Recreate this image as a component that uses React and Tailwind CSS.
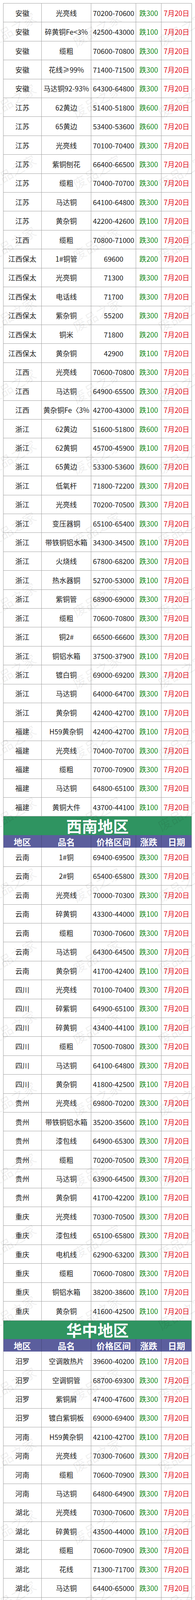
const east = [
  ["安徽", "光亮线", "70200-70600", "跌300"],
  ["安徽", "碎黄铜Fe<3%", "42500-43000", "跌100"],
  ["安徽", "缆粗", "70600-70800", "跌300"],
  ["安徽", "花线≥99%", "71400-71500", "跌300"],
  ["安徽", "马达铜92-93%", "64300-64800", "跌300"],
  ["江苏", "62黄边", "51400-51800", "跌600"],
  ["江苏", "65黄边", "53400-53600", "跌600"],
  ["江苏", "光亮线", "70100-70400", "跌300"],
  ["江苏", "紫铜刨花", "66400-66500", "跌300"],
  ["江苏", "缆粗", "70400-70700", "跌300"],
  ["江苏", "马达铜", "64100-64800", "跌300"],
  ["江苏", "黄杂铜", "42200-42600", "跌100"],
  ["江西", "缆粗", "70800-71000", "跌300"],
  ["江西保太", "1#铜管", "69600", "跌200"],
  ["江西保太", "光亮铜", "71300", "跌300"],
  ["江西保太", "电话线", "71700", "跌300"],
  ["江西保太", "紫杂铜", "55200", "跌300"],
  ["江西保太", "铜米", "71800", "跌200"],
  ["江西保太", "黄杂铜", "42900", "跌100"],
  ["江西", "光亮线", "70600-70800", "跌300"],
  ["江西", "马达铜", "64900-65500", "跌300"],
  ["江西", "黄杂铜Fe〈3%", "42700-43000", "跌100"],
  ["浙江", "62黄边", "51600-51800", "跌600"],
  ["浙江", "62黄铜", "45700-45900", "跌100"],
  ["浙江", "65黄边", "53300-53600", "跌600"],
  ["浙江", "低氧杆", "71800-72200", "跌300"],
  ["浙江", "光亮线", "70200-70500", "跌300"],
  ["浙江", "变压器铜", "65100-65400", "跌300"],
  ["浙江", "带铁铜铝水箱", "34300-34500", "跌100"],
  ["浙江", "火烧线", "67800-68200", "跌300"],
  ["浙江", "热水器铜", "52700-53000", "跌100"],
  ["浙江", "紫铜管", "68900-69000", "跌300"],
  ["浙江", "缆粗", "70600-70800", "跌300"],
  ["浙江", "铜2#", "66500-66600", "跌300"],
  ["浙江", "铜铝水箱", "37500-37900", "跌100"],
  ["浙江", "镀白铜", "69000-69200", "跌300"],
  ["浙江", "马达铜", "64000-64700", "跌300"],
  ["浙江", "黄杂铜", "42400-42700", "跌100"],
  ["福建", "H59黄杂铜", "42400-42700", "跌100"],
  ["福建", "光亮线", "70400-70700", "跌300"],
  ["福建", "缆粗", "70700-70900", "跌300"],
  ["福建", "马达铜", "64800-65100", "跌300"],
  ["福建", "黄铜大件", "43700-44100", "跌100"],
];

const southwest = [
  ["云南", "1#铜", "69400-69500", "跌300"],
  ["云南", "2#铜", "65400-65800", "跌300"],
  ["云南", "光亮线", "70000-70300", "跌300"],
  ["云南", "碎黄铜", "43300-44000", "跌100"],
  ["云南", "缆粗", "70300-70600", "跌300"],
  ["云南", "马达铜", "64300-64500", "跌300"],
  ["云南", "黄杂铜", "41700-42400", "跌100"],
  ["四川", "光亮线", "70100-70400", "跌300"],
  ["四川", "碎紫铜", "64900-65100", "跌300"],
  ["四川", "碎黄铜", "43400-44100", "跌100"],
  ["四川", "缆粗", "70500-70800", "跌300"],
  ["四川", "马达铜", "64100-64800", "跌300"],
  ["四川", "黄杂铜", "41800-42500", "跌100"],
  ["贵州", "光亮线", "69800-70200", "跌300"],
  ["贵州", "带铁铜铝水箱", "35200-35600", "跌100"],
  ["贵州", "漆包线", "64900-65300", "跌300"],
  ["贵州", "缆粗", "70200-70500", "跌300"],
  ["贵州", "马达铜", "63900-64500", "跌300"],
  ["贵州", "黄杂铜", "41700-42200", "跌100"],
  ["重庆", "光亮线", "70300-70500", "跌300"],
  ["重庆", "漆包线", "65100-65800", "跌300"],
  ["重庆", "电机线", "62900-63200", "跌300"],
  ["重庆", "缆粗", "70600-70800", "跌300"],
  ["重庆", "铜铝水箱", "38200-38600", "跌100"],
  ["重庆", "黄杂铜", "41600-42500", "跌100"],
];

const central = [
  ["汨罗", "空调散热片", "39600-40200", "跌100"],
  ["汨罗", "空调铜管", "68700-69300", "跌300"],
  ["汨罗", "紫铜屑", "47400-47600", "跌300"],
  ["汨罗", "镀白紫铜板", "69000-69400", "跌300"],
  ["河南", "H59黄杂铜", "42100-42700", "跌100"],
  ["河南", "光亮线", "70300-70600", "跌300"],
  ["河南", "缆粗", "70600-70900", "跌300"],
  ["河南", "马达铜", "64800-64900", "跌300"],
  ["湖北", "光亮线", "70300-70600", "跌300"],
  ["湖北", "碎黄铜", "43500-44000", "跌100"],
  ["湖北", "缆粗", "70600-70900", "跌300"],
  ["湖北", "花线", "71300-71700", "跌300"],
  ["湖北", "马达铜", "64400-65000", "跌300"],
  ["湖北", "黄铜大件", "43600-44200", "跌100"],
  ["湖北", "黄铜水箱", "42100-42700", "跌100"],
  ["湖南", "光亮线", "70200-70500", "跌300"],
  ["湖南", "碎黄铜", "43100-43900", "跌100"],
  ["湖南", "缆粗", "70600-70800", "跌300"],
  ["湖南", "马达铜", "64300-64900", "跌300"],
  ["湖南", "黄杂铜", "42000-42700", "跌100"],
  ["河南", "火烧线95-96%", "66800-67100", "跌300"],
  ["河南", "碎紫铜90%左右", "64900-65300", "跌300"],
];

// shared column template: 地区 / 品名 / 价格区间 / 涨跌 / 日期
const cols = "grid grid-cols-[97.7px_127.6px_115px_65px_1fr]";

function Row({ row }) {
  const [area, name, price, change] = row;
  return (
    <div className={`${cols} h-[48.42px] overflow-hidden border-b border-[#a3a3a3] text-[18px] leading-none`}>
      <div className="flex items-center justify-center border-r border-[#a3a3a3] text-[#1c1c1c]">{area}</div>
      <div className="flex items-center justify-center whitespace-nowrap border-r border-[#a3a3a3] text-[#1c1c1c]">{name}</div>
      <div className="flex items-center justify-center border-r border-[#a3a3a3] text-[#1c1c1c]">{price}</div>
      <div className="flex items-center justify-center border-r border-[#a3a3a3] text-[#15891a]">{change}</div>
      <div className="flex items-center justify-center text-[#e3101c]">7月20日</div>
    </div>
  );
}

function SectionHead({ title }) {
  return (
    <>
      <div className="flex h-[47.5px] items-center justify-center bg-[#2f9461] text-[40px] font-bold leading-none text-white">
        {title}
      </div>
      <div className={`${cols} h-[32.4px] bg-[#5b5e9d] text-[22px] font-bold leading-none text-white`}>
        <div className="flex items-center justify-center border-r border-[#44467a]">地区</div>
        <div className="flex items-center justify-center border-r border-[#44467a]">品名</div>
        <div className="flex items-center justify-center border-r border-[#44467a]">价格区间</div>
        <div className="flex items-center justify-center border-r border-[#44467a]">涨跌</div>
        <div className="flex items-center justify-center">日期</div>
      </div>
    </>
  );
}

// faint diagonal "废品之家" watermark tiled over the table
function Watermarks() {
  const marks = [];
  for (let k = 0; k < 25; k++) {
    [30, 248, 466].forEach((x) => {
      marks.push({ x, y: 75 + k * 182.5 });
    });
  }
  return (
    <div className="pointer-events-none absolute inset-0 overflow-hidden">
      {marks.map((m, i) => (
        <div
          key={i}
          className="absolute -translate-x-1/2 -translate-y-1/2 -rotate-30 whitespace-nowrap text-[34px] leading-none text-black/[0.07]"
          style={{ left: m.x, top: m.y }}
        >
          废品之家
        </div>
      ))}
    </div>
  );
}

export default function App() {
  return (
    <div
      className="relative h-[4535px] w-[500px] overflow-hidden bg-white pt-2"
      style={{ fontFamily: '"Noto Sans CJK SC", "Noto Sans", sans-serif' }}
    >
      <div className="mx-2 border-x border-t border-[#a3a3a3]">
        {east.map((r, i) => (
          <Row key={"e" + i} row={r} />
        ))}
        <SectionHead title="西南地区" />
        {southwest.map((r, i) => (
          <Row key={"s" + i} row={r} />
        ))}
        <SectionHead title="华中地区" />
        {central.map((r, i) => (
          <Row key={"c" + i} row={r} />
        ))}
      </div>
      <Watermarks />
    </div>
  );
}
